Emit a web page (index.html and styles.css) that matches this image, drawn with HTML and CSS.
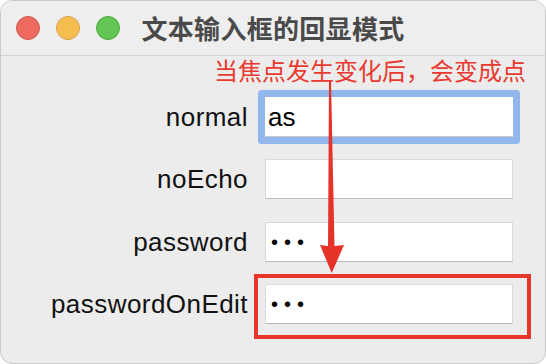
FILE: index.html
```html
<!DOCTYPE html>
<html lang="zh">
<head>
<meta charset="utf-8">
<title>文本输入框的回显模式</title>
<link rel="stylesheet" href="styles.css">
</head>
<body>
<div class="window">
  <div class="titlebar">
    <div class="lights">
      <span class="light red"></span>
      <span class="light yellow"></span>
      <span class="light green"></span>
    </div>
    <div class="title">文本输入框的回显模式</div>
    <div></div>
  </div>
  <div class="note">当焦点发生变化后，会变成点</div>
  <div class="form">
    <div class="label">normal</div>
    <div class="field focused">as</div>
    <div class="label">noEcho</div>
    <div class="field"></div>
    <div class="label">password</div>
    <div class="field dots">•••</div>
    <div class="label">passwordOnEdit</div>
    <div class="field dots marked">•••</div>
  </div>
  <svg class="arrow" width="546" height="364" viewBox="0 0 546 364">
    <polygon points="329,80 331,80 334.5,246 344,245 331.7,273 320,245 328,246" fill="#e6332a"/>
  </svg>
</div>
</body>
</html>
```
FILE: styles.css
```css
html, body {
  margin: 0;
  padding: 0;
  background: #ffffff;
}
.window {
  position: relative;
  width: 546px;
  height: 364px;
  box-sizing: border-box;
  background: #ececec;
  border: 1px solid #c9c9c9;
  border-radius: 12px;
  overflow: hidden;
  font-family: "Liberation Sans", "Noto Sans CJK SC", sans-serif;
}
.titlebar {
  height: 54px;
  display: grid;
  grid-template-columns: 1fr auto 1fr;
  align-items: center;
  background: #eeeeee;
  border-bottom: 1px solid #d3d3d3;
}
.lights {
  display: flex;
  gap: 16px;
  padding-left: 15px;
}
.light {
  width: 22px;
  height: 22px;
  border-radius: 50%;
  border: 1px solid;
}
.red { background: #ee6a5f; border-color: #d4584d; }
.yellow { background: #f6be50; border-color: #d9a141; }
.green { background: #62c655; border-color: #4fa840; }
.title {
  font-family: "Noto Sans CJK SC", sans-serif;
  font-weight: bold;
  font-size: 26px;
  line-height: 30px;
  color: #4a4a4a;
  letter-spacing: 0.3px;
}
.note {
  font-family: "Noto Sans CJK SC", sans-serif;
  font-size: 24px;
  line-height: 25px;
  height: 25px;
  color: #ea3a30;
  text-align: right;
  padding-right: 19px;
  padding-top: 1px;
  margin-bottom: -1px;
}
.form {
  margin-top: 16px;
  display: grid;
  grid-template-columns: 247px 248px;
  grid-auto-rows: 40px;
  column-gap: 17px;
  row-gap: 22.3px;
}
.label {
  font-size: 26px;
  line-height: 40px;
  letter-spacing: 0.45px;
  text-align: right;
  color: #111;
}
.field {
  position: relative;
  box-sizing: border-box;
  background: #fff;
  border: 1px solid #dadada;
  border-bottom-color: #bcbcbc;
  font-size: 26px;
  line-height: 38px;
  padding-left: 2px;
  color: #000;
}
.field.focused {
  border-color: #ffffff;
  border-bottom-color: #c8c8c8;
  box-shadow: 0 0 0 7px #92b7ec;
  border-radius: 1px;
}
.field.dots {
  font-size: 20px;
  letter-spacing: 6px;
  padding-left: 5px;
}
.field.marked::after {
  content: "";
  position: absolute;
  top: -11px;
  left: -12px;
  right: -19px;
  bottom: -16px;
  border: 4px solid #e8352b;
}
.arrow {
  position: absolute;
  left: -1px;
  top: -1px;
  pointer-events: none;
}
```
